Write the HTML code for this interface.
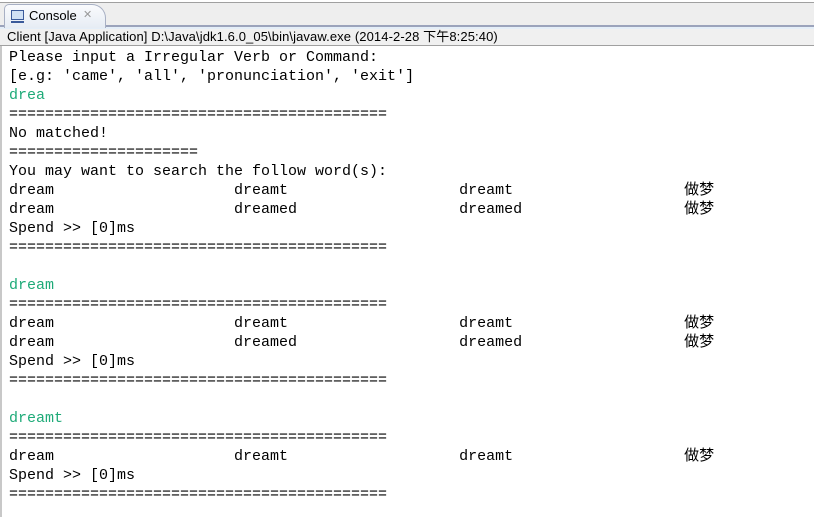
<!DOCTYPE html>
<html><head><meta charset="utf-8"><style>
body{margin:0;width:814px;height:517px;overflow:hidden;background:#fff;position:relative;font-family:"Liberation Sans","Noto Sans CJK SC",sans-serif}
.top{position:absolute;left:0;top:2px;width:814px;height:1px;background:#a0a0a0}
.bar{position:absolute;left:0;top:3px;width:814px;height:23px;background:#eeeeee}
.bl{position:absolute;left:0;top:25px;width:814px;height:2px;background:#9ba3bb}
.bl2{position:absolute;left:0;top:27px;width:814px;height:2px;background:#e4eef8}
.tab{position:absolute;left:4px;top:4px;width:100px;height:23px;background:linear-gradient(#fafbfd,#e6ecf4);border:1px solid #a8b0c4;border-bottom:none;border-radius:5px 14px 0 0;font-size:13px;color:#000}
.tab span{position:absolute;left:24px;top:3px}
.tab i{position:absolute;left:78px;top:3px;font-style:normal;color:#999;font-size:11px}
.ico{position:absolute;left:6px;top:5px;width:11px;height:8px;border:1px solid #3a5a9a;background:#cfe0f4}
.ico2{position:absolute;left:6px;top:16px;width:13px;height:2px;background:#3a5a9a}
.cl{position:absolute;left:0;top:29px;width:814px;height:16px;background:#f0f0f0;font-size:13px;line-height:16px;padding-left:7px;letter-spacing:0.1px}
.bb{position:absolute;left:0;top:45px;width:814px;height:1px;background:#a0a0a0}
.lb{position:absolute;left:0;top:46px;width:2px;height:471px;background:#c8c8c8}
pre{position:absolute;left:9px;top:48px;margin:0;font-family:"Liberation Mono","Noto Sans CJK SC",monospace;font-size:15px;line-height:19px;color:#000}
.g{color:#1eaa78}
</style></head><body>
<div class="top"></div><div class="bar"></div><div class="bl"></div><div class="bl2"></div>
<div class="tab"><div class="ico"></div><div class="ico2"></div><span>Console</span><i>✕</i></div>
<div class="cl">Client [Java Application] D:\Java\jdk1.6.0_05\bin\javaw.exe (2014-2-28 下午8:25:40)</div>
<div class="bb"></div><div class="lb"></div>
<pre>Please input a Irregular Verb or Command:
[e.g: 'came', 'all', 'pronunciation', 'exit']
<span class="g">drea</span>
==========================================
No matched!
=====================
You may want to search the follow word(s):
dream                    dreamt                   dreamt                   做梦
dream                    dreamed                  dreamed                  做梦
Spend >> [0]ms
==========================================

<span class="g">dream</span>
==========================================
dream                    dreamt                   dreamt                   做梦
dream                    dreamed                  dreamed                  做梦
Spend >> [0]ms
==========================================

<span class="g">dreamt</span>
==========================================
dream                    dreamt                   dreamt                   做梦
Spend >> [0]ms
==========================================</pre>
</body></html>
